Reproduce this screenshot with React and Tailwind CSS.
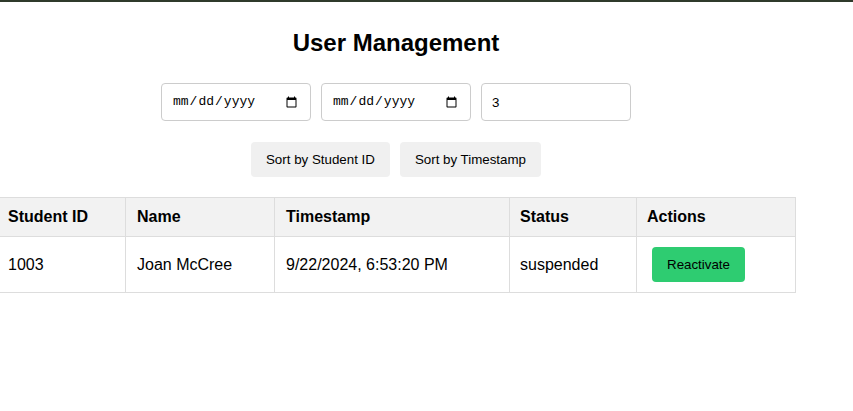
import React, { useState } from "react";

const users = [
  { id: 1003, name: "Joan McCree", timestamp: "9/22/2024, 6:53:20 PM", status: "suspended" },
];

const App = () => {
  const [from, setFrom] = useState("");
  const [to, setTo] = useState("");
  const [limit, setLimit] = useState("3");

  return (
    <div className="min-h-screen bg-white text-black font-['Liberation_Sans',Arial,sans-serif]">
      <div className="h-[2px] bg-[#2f3a2b]" />

      <div className="-ml-[5px] w-[802px] flex flex-col items-center">
        <h1 className="mt-[27px] text-[24px] leading-[28px] font-bold">User Management</h1>

        {/* Filters */}
        <div className="mt-[26px] flex gap-[10px]">
          <input
            type="date"
            value={from}
            onChange={(e) => setFrom(e.target.value)}
            className="w-[150px] h-[38px] px-[10px] border border-[#ccc] rounded-[4px] text-[13px] font-['Liberation_Mono',monospace]"
          />
          <input
            type="date"
            value={to}
            onChange={(e) => setTo(e.target.value)}
            className="w-[150px] h-[38px] px-[10px] border border-[#ccc] rounded-[4px] text-[13px] font-['Liberation_Mono',monospace]"
          />
          <input
            type="text"
            value={limit}
            onChange={(e) => setLimit(e.target.value)}
            className="w-[150px] h-[38px] px-[10px] border border-[#ccc] rounded-[4px] text-[13.33px] outline-none"
          />
        </div>

        {/* Sort buttons */}
        <div className="mt-[21px] flex gap-[10px]">
          <button className="h-[35px] px-[15px] bg-[#f0f0f0] rounded-[4px] text-[13.33px]">
            Sort by Student ID
          </button>
          <button className="h-[35px] px-[15px] bg-[#f0f0f0] rounded-[4px] text-[13.33px]">
            Sort by Timestamp
          </button>
        </div>

        {/* Table */}
        <table className="self-start mt-[20px] w-[800px] table-fixed border-collapse text-[16px] leading-[18px] text-left">
          <thead>
            <tr className="bg-[#f2f2f2]">
              <th className="w-[130px] border border-[#ddd] px-[12px] py-[10px] font-bold">Student ID</th>
              <th className="w-[149px] border border-[#ddd] px-[11px] py-[10px] font-bold">Name</th>
              <th className="w-[235px] border border-[#ddd] px-[11px] py-[10px] font-bold">Timestamp</th>
              <th className="w-[127px] border border-[#ddd] px-[10px] py-[10px] font-bold">Status</th>
              <th className="w-[159px] border border-[#ddd] px-[10px] py-[10px] font-bold">Actions</th>
            </tr>
          </thead>
          <tbody>
            {users.map((u) => (
              <tr key={u.id}>
                <td className="border border-[#ddd] px-[12px] py-[10px]">{u.id}</td>
                <td className="border border-[#ddd] px-[11px] py-[10px]">{u.name}</td>
                <td className="border border-[#ddd] px-[11px] py-[10px]">{u.timestamp}</td>
                <td className="border border-[#ddd] px-[10px] py-[10px]">{u.status}</td>
                <td className="border border-[#ddd] px-[10px] py-[10px]">
                  <button className="block ml-[5px] h-[35px] px-[15px] bg-[#2ecc71] rounded-[4px] text-[13.33px] leading-[16px]">
                    Reactivate
                  </button>
                </td>
              </tr>
            ))}
          </tbody>
        </table>
      </div>
    </div>
  );
};

export default App;
